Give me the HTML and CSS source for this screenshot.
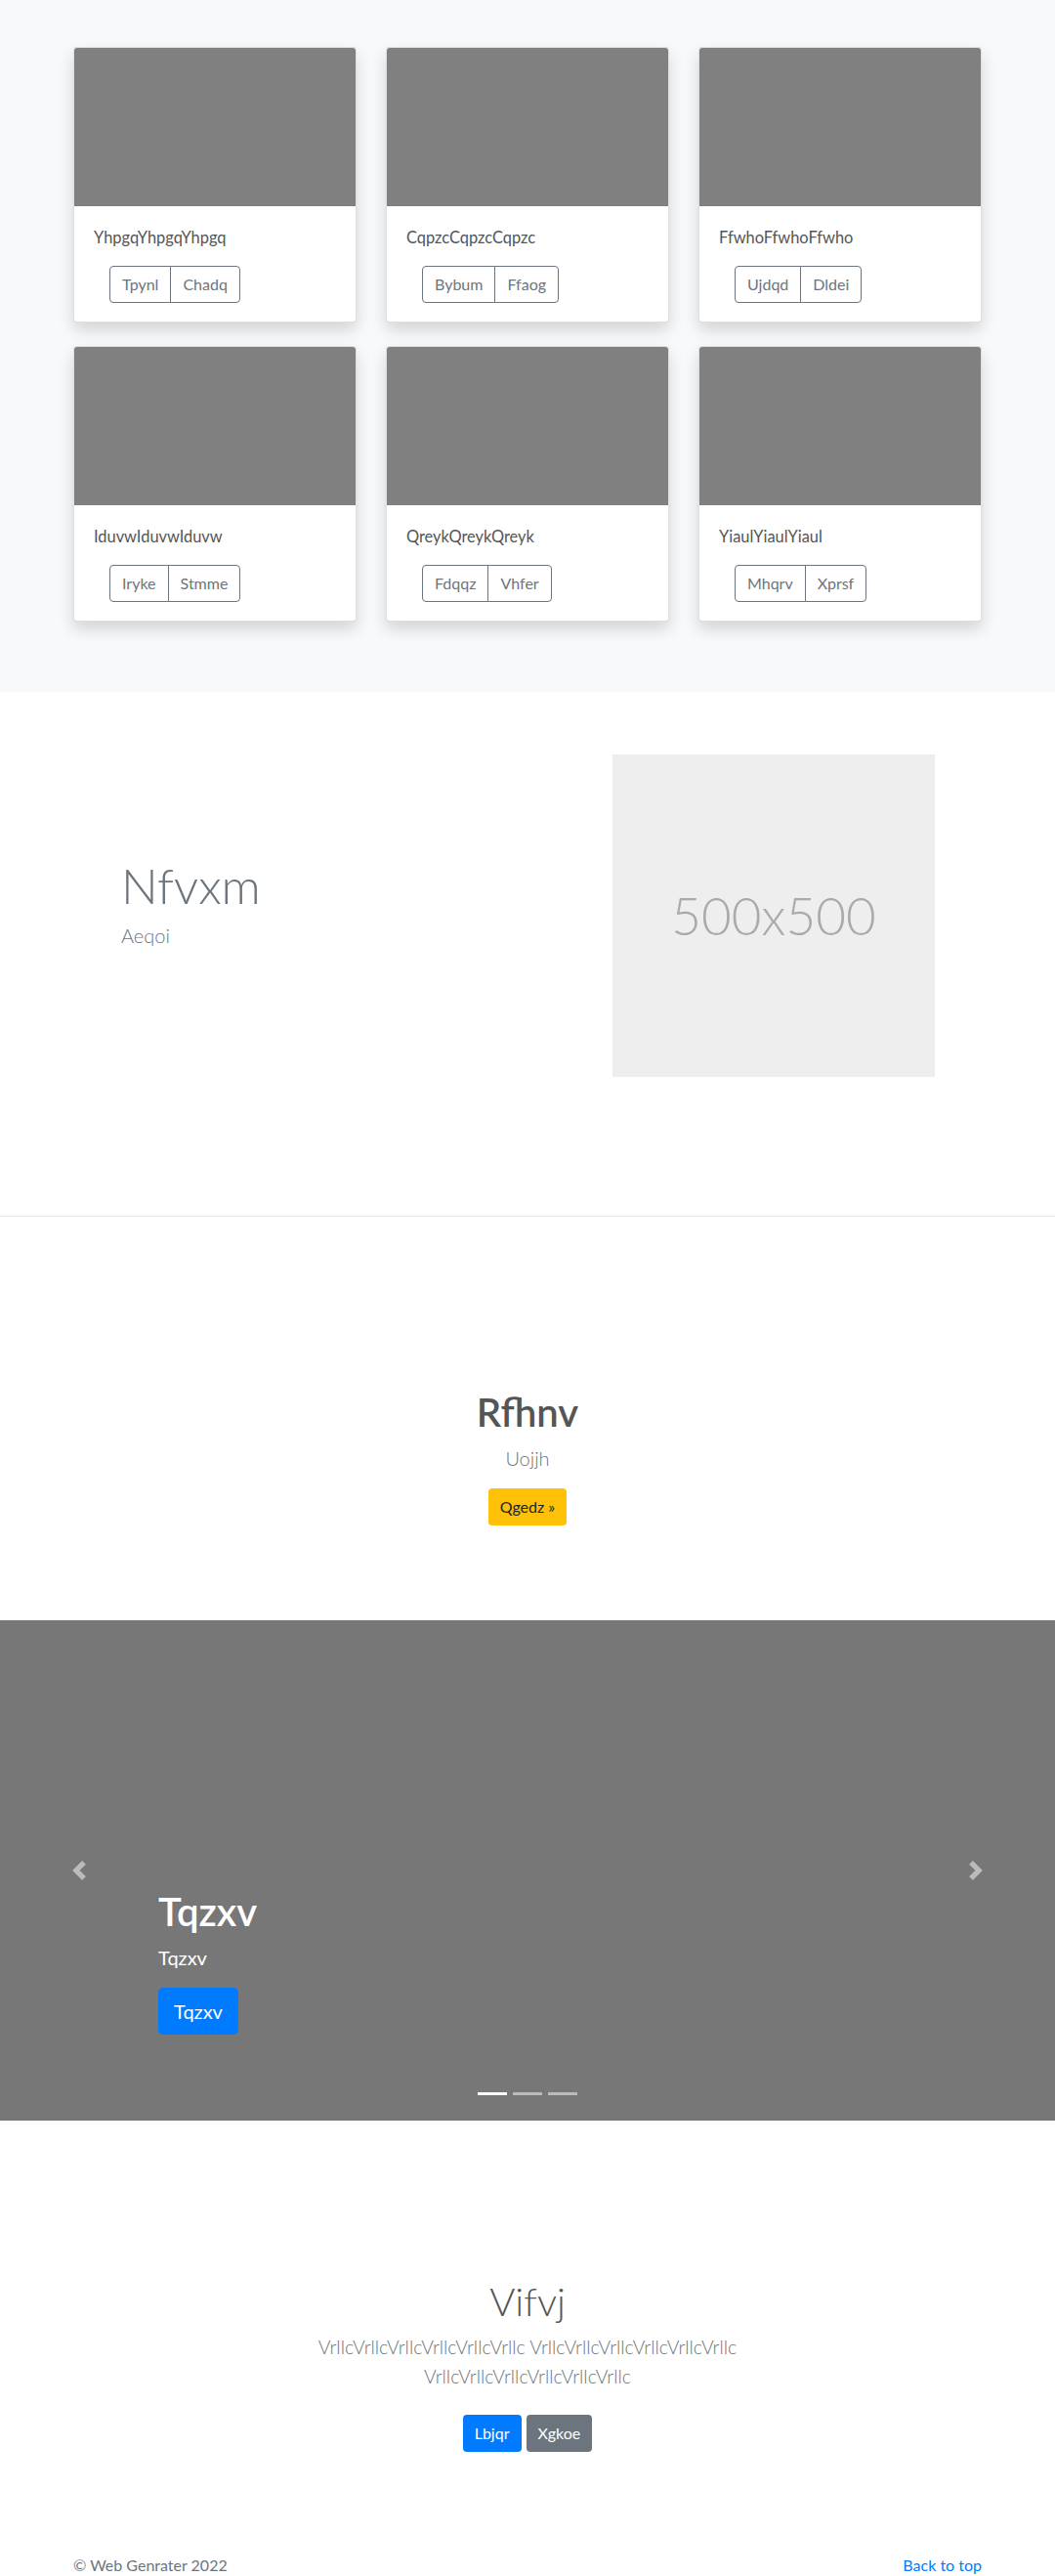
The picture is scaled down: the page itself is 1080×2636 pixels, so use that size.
FILE: index.html
```html
<!DOCTYPE html>
<html lang="en">
<head>
<meta charset="utf-8">
<title>Album</title>
<link rel="stylesheet" href="styles.css">
</head>
<body>
<main>
  <section class="album">
    <div class="container">
      <div class="card-grid">
        <div class="card">
          <div class="card-img"></div>
          <div class="card-body">
            <p class="card-text">YhpgqYhpgqYhpgq</p>
            <div class="btn-group"><button class="btn-outline">Tpynl</button><button class="btn-outline">Chadq</button></div>
          </div>
        </div>
        <div class="card">
          <div class="card-img"></div>
          <div class="card-body">
            <p class="card-text">CqpzcCqpzcCqpzc</p>
            <div class="btn-group"><button class="btn-outline">Bybum</button><button class="btn-outline">Ffaog</button></div>
          </div>
        </div>
        <div class="card">
          <div class="card-img"></div>
          <div class="card-body">
            <p class="card-text">FfwhoFfwhoFfwho</p>
            <div class="btn-group"><button class="btn-outline">Ujdqd</button><button class="btn-outline">Dldei</button></div>
          </div>
        </div>
        <div class="card">
          <div class="card-img"></div>
          <div class="card-body">
            <p class="card-text">IduvwIduvwIduvw</p>
            <div class="btn-group"><button class="btn-outline">Iryke</button><button class="btn-outline">Stmme</button></div>
          </div>
        </div>
        <div class="card">
          <div class="card-img"></div>
          <div class="card-body">
            <p class="card-text">QreykQreykQreyk</p>
            <div class="btn-group"><button class="btn-outline">Fdqqz</button><button class="btn-outline">Vhfer</button></div>
          </div>
        </div>
        <div class="card">
          <div class="card-img"></div>
          <div class="card-body">
            <p class="card-text">YiaulYiaulYiaul</p>
            <div class="btn-group"><button class="btn-outline">Mhqrv</button><button class="btn-outline">Xprsf</button></div>
          </div>
        </div>
      </div>
    </div>
  </section>

  <section class="feature">
    <div class="container feature-row">
      <div class="feature-text">
        <h2 class="feature-heading">Nfvxm</h2>
        <p class="lead">Aeqoi</p>
      </div>
      <div class="placeholder">500x500</div>
    </div>
  </section>

  <section class="cta">
    <h1 class="cta-heading">Rfhnv</h1>
    <p class="lead">Uojjh</p>
    <a class="btn btn-warning" href="#">Qgedz &raquo;</a>
  </section>

  <section class="carousel">
    <div class="carousel-caption">
      <h1 class="caption-heading">Tqzxv</h1>
      <p class="caption-text">Tqzxv</p>
      <a class="btn btn-primary btn-lg" href="#">Tqzxv</a>
    </div>
    <a class="carousel-control prev" href="#">
      <svg viewBox="0 0 8 8" width="20" height="20"><path fill="#fff" d="M5.25 0l-4 4 4 4 1.5-1.5L4.25 4l2.5-2.5L5.25 0z"/></svg>
    </a>
    <a class="carousel-control next" href="#">
      <svg viewBox="0 0 8 8" width="20" height="20"><path fill="#fff" d="M2.75 0l-1.5 1.5L3.75 4l-2.5 2.5L2.75 8l4-4-4-4z"/></svg>
    </a>
    <ol class="carousel-indicators">
      <li class="active"></li>
      <li></li>
      <li></li>
    </ol>
  </section>

  <section class="jumbo">
    <h1 class="jumbo-heading">Vifvj</h1>
    <p class="lead jumbo-lead">VrllcVrllcVrllcVrllcVrllcVrllc VrllcVrllcVrllcVrllcVrllcVrllc VrllcVrllcVrllcVrllcVrllcVrllc</p>
    <div class="jumbo-actions">
      <a class="btn btn-primary" href="#">Lbjqr</a>
      <a class="btn btn-secondary" href="#">Xgkoe</a>
    </div>
  </section>
</main>

<footer class="footer">
  <div class="container footer-row">
    <p>&copy; Web Genrater 2022</p>
    <p><a href="#">Back to top</a></p>
  </div>
</footer>
</body>
</html>
```

FILE: styles.css
```css
* { box-sizing: border-box; }

html, body { margin: 0; padding: 0; }

body {
  font-family: Lato, "Noto Sans", "Liberation Sans", sans-serif;
  font-size: 16px;
  line-height: 1.5;
  color: #212529;
  background: #fff;
}

p { margin: 0; }
h1, h2 { margin: 0; }

a { text-decoration: none; }

.container {
  width: 930px;
  margin: 0 auto;
}

/* ---------- album ---------- */
.album {
  background: #f8f9fa;
  padding: 48px 0 72px;
}

.card-grid {
  display: grid;
  grid-template-columns: repeat(3, 290px);
  column-gap: 30px;
  row-gap: 24px;
}

.card {
  background: #fff;
  border: 1px solid rgba(0, 0, 0, .125);
  border-radius: 4px;
  overflow: hidden;
  box-shadow: 0 8px 16px rgba(0, 0, 0, .15);
  height: 282px;
}

.card-img {
  height: 162px;
  background: #808080;
}

.card-body {
  padding: 20px;
}

.card-text {
  color: #555;
  margin-bottom: 16px;
  font-size: 16.4px;
}

.btn-group {
  display: inline-flex;
  margin-left: 16px;
}

.btn-outline {
  font-family: inherit;
  font-size: 16px;
  line-height: 24px;
  color: #6c757d;
  background: transparent;
  border: 1px solid #6c757d;
  padding: 6px 12px;
  margin: 0;
  border-radius: 0;
}
.btn-outline:first-child { border-radius: 4px 0 0 4px; }
.btn-outline:last-child { border-radius: 0 4px 4px 0; margin-left: -1px; }

/* ---------- feature ---------- */
.feature {
  padding: 64px 0 142px;
  border-bottom: 1px solid #e6e6e6;
}

.feature-row {
  display: flex;
  align-items: flex-start;
}

.feature-text {
  flex: 0 0 552px;
  padding-left: 49px;
  margin-top: 104px;
}

.feature-heading {
  font-size: 50px;
  font-weight: 300;
  line-height: 1.2;
  color: #6c757d;
  margin-bottom: 6px;
}

.lead {
  font-size: 20px;
  font-weight: 300;
  line-height: 30px;
  color: #6c757d;
}

.placeholder {
  width: 330px;
  height: 330px;
  background: #eee;
  color: #aaa;
  font-size: 53px;
  font-weight: 300;
  display: flex;
  align-items: center;
  justify-content: center;
}

/* ---------- buttons ---------- */
.btn {
  display: inline-block;
  font-size: 16px;
  line-height: 24px;
  padding: 7px 12px;
  border-radius: 4px;
}
.btn-warning { background: #ffc107; color: #212529; }
.btn-primary { background: #007bff; color: #fff; }
.btn-secondary { background: #6c757d; color: #fff; }
.btn-lg {
  font-size: 20px;
  line-height: 30px;
  padding: 9px 16px;
  border-radius: 5px;
}

/* ---------- cta ---------- */
.cta {
  padding: 176px 0 97px;
  text-align: center;
}

.cta-heading {
  font-size: 40px;
  font-weight: 600;
  line-height: 48px;
  color: #555;
  margin-bottom: 8px;
}

.cta .lead { margin-bottom: 16px; }

/* ---------- carousel ---------- */
.carousel {
  position: relative;
  height: 512px;
  background: #777;
  display: flex;
  align-items: flex-end;
  padding: 0 162px 88px;
}

.carousel-caption {
  color: #fff;
}

.caption-heading {
  font-size: 40px;
  font-weight: 600;
  line-height: 48px;
  margin-bottom: 8px;
}

.caption-text {
  font-size: 20px;
  line-height: 30px;
  margin-bottom: 16px;
}

.carousel-control {
  position: absolute;
  top: 0;
  bottom: 0;
  width: 162px;
  display: flex;
  align-items: center;
  justify-content: center;
  opacity: .5;
}
.carousel-control.prev { left: 0; }
.carousel-control.next { right: 0; }
.carousel-control svg { display: block; }

.carousel-indicators {
  position: absolute;
  left: 0;
  right: 0;
  bottom: 26px;
  margin: 0;
  padding: 0;
  list-style: none;
  display: flex;
  justify-content: center;
  gap: 6px;
}
.carousel-indicators li {
  width: 30px;
  height: 3px;
  background: #fff;
  opacity: .5;
}
.carousel-indicators li.active { opacity: 1; }

/* ---------- jumbo ---------- */
.jumbo {
  padding: 161px 0 48px;
  text-align: center;
}

.jumbo-heading {
  font-size: 40px;
  font-weight: 300;
  line-height: 48px;
  color: #555;
  margin-bottom: 8px;
}

.jumbo-lead {
  max-width: 560px;
  margin: 0 auto 24px;
  font-size: 19.4px;
}

.jumbo-actions {
  display: flex;
  justify-content: center;
  gap: 5px;
  margin: 0 0 8px;
}
.jumbo-actions .btn { padding: 7px 12px; }

/* ---------- footer ---------- */
.footer {
  padding: 48px 0;
  color: #6c757d;
}

.footer-row {
  display: flex;
  justify-content: space-between;
}

.footer a { color: #007bff; }
```
